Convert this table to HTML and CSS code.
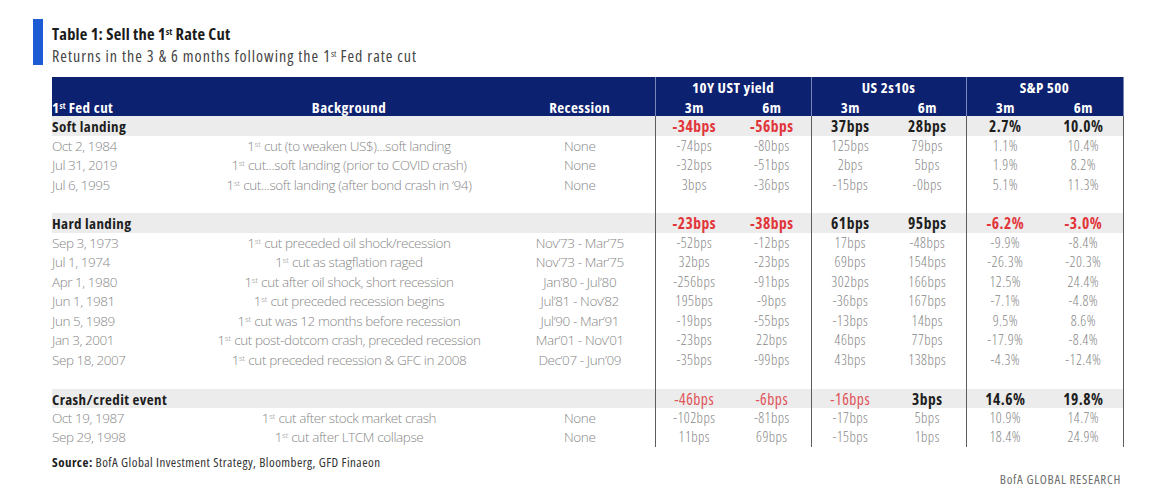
FILE: index.html
```html
<!DOCTYPE html>
<html lang="en">
<head>
<meta charset="utf-8">
<title>Table 1: Sell the 1st Rate Cut</title>
<link rel="stylesheet" href="styles.css">
</head>
<body>
<div class="page">
  <header class="heading">
    <div class="heading-bar"></div>
    <div class="heading-text">
      <h1 class="title">Table 1: Sell the 1<sup>st</sup> Rate Cut</h1>
      <p class="subtitle">Returns in the 3 &amp; 6 months following the 1<sup>st</sup> Fed rate cut</p>
    </div>
  </header>

  <div class="table-wrap">
    <table class="data">
      <colgroup>
        <col class="c-date"><col class="c-bg"><col class="c-rec">
        <col class="c-a"><col class="c-b">
        <col class="c-a"><col class="c-b2">
        <col class="c-a"><col class="c-b3">
      </colgroup>
      <thead>
        <tr class="hrow">
          <th class="h-left" rowspan="2">1<sup>st</sup> Fed cut</th>
          <th rowspan="2">Background</th>
          <th rowspan="2">Recession</th>
          <th class="grp" colspan="2">10Y UST yield</th>
          <th class="grp" colspan="2">US 2s10s</th>
          <th class="grp grp-last" colspan="2">S&amp;P 500</th>
        </tr>
        <tr class="hrow">
          <th class="grp">3m</th><th>6m</th>
          <th class="grp">3m</th><th>6m</th>
          <th class="grp">3m</th><th class="grp-last">6m</th>
        </tr>
      </thead>
      <tbody>
        <tr class="band">
          <td class="lbl" colspan="3">Soft landing</td>
          <td class="g neg">-34bps</td><td class="neg">-56bps</td>
          <td class="g">37bps</td><td>28bps</td>
          <td class="g">2.7%</td><td class="last">10.0%</td>
        </tr>
        <tr>
          <td class="date">Oct 2, 1984</td><td class="txt">1<sup>st</sup> cut (to weaken US$)...soft landing</td><td class="txt">None</td>
          <td class="g">-74bps</td><td>-80bps</td><td class="g">125bps</td><td>79bps</td><td class="g">1.1%</td><td class="last">10.4%</td>
        </tr>
        <tr>
          <td class="date">Jul 31, 2019</td><td class="txt">1<sup>st</sup> cut...soft landing (prior to COVID crash)</td><td class="txt">None</td>
          <td class="g">-32bps</td><td>-51bps</td><td class="g">2bps</td><td>5bps</td><td class="g">1.9%</td><td class="last">8.2%</td>
        </tr>
        <tr>
          <td class="date">Jul 6, 1995</td><td class="txt">1<sup>st</sup> cut...soft landing (after bond crash in ’94)</td><td class="txt">None</td>
          <td class="g">3bps</td><td>-36bps</td><td class="g">-15bps</td><td>-0bps</td><td class="g">5.1%</td><td class="last">11.3%</td>
        </tr>
        <tr class="blank">
          <td colspan="3"></td><td class="g" colspan="2"></td><td class="g" colspan="2"></td><td class="g last" colspan="2"></td>
        </tr>
        <tr class="band">
          <td class="lbl" colspan="3">Hard landing</td>
          <td class="g neg">-23bps</td><td class="neg">-38bps</td>
          <td class="g">61bps</td><td>95bps</td>
          <td class="g neg">-6.2%</td><td class="neg last">-3.0%</td>
        </tr>
        <tr>
          <td class="date">Sep 3, 1973</td><td class="txt">1<sup>st</sup> cut preceded oil shock/recession</td><td class="txt">Nov’73 - Mar’75</td>
          <td class="g">-52bps</td><td>-12bps</td><td class="g">17bps</td><td>-48bps</td><td class="g">-9.9%</td><td class="last">-8.4%</td>
        </tr>
        <tr>
          <td class="date">Jul 1, 1974</td><td class="txt">1<sup>st</sup> cut as stagflation raged</td><td class="txt">Nov’73 - Mar’75</td>
          <td class="g">32bps</td><td>-23bps</td><td class="g">69bps</td><td>154bps</td><td class="g">-26.3%</td><td class="last">-20.3%</td>
        </tr>
        <tr>
          <td class="date">Apr 1, 1980</td><td class="txt">1<sup>st</sup> cut after oil shock, short recession</td><td class="txt">Jan’80 - Jul’80</td>
          <td class="g">-256bps</td><td>-91bps</td><td class="g">302bps</td><td>166bps</td><td class="g">12.5%</td><td class="last">24.4%</td>
        </tr>
        <tr>
          <td class="date">Jun 1, 1981</td><td class="txt">1<sup>st</sup> cut preceded recession begins</td><td class="txt">Jul’81 - Nov’82</td>
          <td class="g">195bps</td><td>-9bps</td><td class="g">-36bps</td><td>167bps</td><td class="g">-7.1%</td><td class="last">-4.8%</td>
        </tr>
        <tr>
          <td class="date">Jun 5, 1989</td><td class="txt">1<sup>st</sup> cut was 12 months before recession</td><td class="txt">Jul’90 - Mar’91</td>
          <td class="g">-19bps</td><td>-55bps</td><td class="g">-13bps</td><td>14bps</td><td class="g">9.5%</td><td class="last">8.6%</td>
        </tr>
        <tr>
          <td class="date">Jan 3, 2001</td><td class="txt">1<sup>st</sup> cut post-dotcom crash, preceded recession</td><td class="txt">Mar’01 - Nov’01</td>
          <td class="g">-23bps</td><td>22bps</td><td class="g">46bps</td><td>77bps</td><td class="g">-17.9%</td><td class="last">-8.4%</td>
        </tr>
        <tr>
          <td class="date">Sep 18, 2007</td><td class="txt">1<sup>st</sup> cut preceded recession &amp; GFC in 2008</td><td class="txt">Dec’07 - Jun’09</td>
          <td class="g">-35bps</td><td>-99bps</td><td class="g">43bps</td><td>138bps</td><td class="g">-4.3%</td><td class="last">-12.4%</td>
        </tr>
        <tr class="blank">
          <td colspan="3"></td><td class="g" colspan="2"></td><td class="g" colspan="2"></td><td class="g last" colspan="2"></td>
        </tr>
        <tr class="band">
          <td class="lbl" colspan="3">Crash/credit event</td>
          <td class="g neg soft">-46bps</td><td class="neg soft">-6bps</td>
          <td class="g neg soft">-16bps</td><td>3bps</td>
          <td class="g">14.6%</td><td class="last">19.8%</td>
        </tr>
        <tr>
          <td class="date">Oct 19, 1987</td><td class="txt">1<sup>st</sup> cut after stock market crash</td><td class="txt">None</td>
          <td class="g">-102bps</td><td>-81bps</td><td class="g">-17bps</td><td>5bps</td><td class="g">10.9%</td><td class="last">14.7%</td>
        </tr>
        <tr>
          <td class="date">Sep 29, 1998</td><td class="txt">1<sup>st</sup> cut after LTCM collapse</td><td class="txt">None</td>
          <td class="g">11bps</td><td>69bps</td><td class="g">-15bps</td><td>1bps</td><td class="g">18.4%</td><td class="last">24.9%</td>
        </tr>
      </tbody>
    </table>
    <p class="source"><b>Source:</b> BofA Global Investment Strategy, Bloomberg, GFD Finaeon</p>
    <p class="brand">BofA GLOBAL RESEARCH</p>
  </div>
</div>
</body>
</html>
```

FILE: styles.css
```css
html, body {
  margin: 0;
  background: #ffffff;
}

body {
  font-family: "Open Sans", "Liberation Sans", sans-serif;
  font-stretch: 75%;
  color: #222;
}

.page {
  padding: 19px 0 0 33px;
}

.heading {
  display: flex;
  align-items: flex-start;
  gap: 9px;
}

.heading-bar {
  flex: none;
  width: 10px;
  height: 46px;
  background: #1d5bd4;
}

.heading-text {
  padding-top: 4px;
}

.title {
  margin: 0;
  font-size: 16.5px;
  line-height: 22.5px;
  font-weight: 700;
  letter-spacing: 0.2px;
  color: #1c1c1c;
}

.subtitle {
  margin: 0;
  font-size: 16px;
  line-height: 21.8px;
  font-weight: 400;
  letter-spacing: 1px;
  color: #454545;
}

sup {
  font-size: 0.58em;
  line-height: 0;
  vertical-align: 0.5em;
  letter-spacing: 0;
}

.table-wrap {
  width: 1071px;
  margin: 10px 0 0 19px;
}

.data {
  width: 1071px;
  table-layout: fixed;
  border-collapse: collapse;
  border-spacing: 0;
}

.c-date { width: 141px; }
.c-bg { width: 312px; }
.c-rec { width: 150px; }
.c-a { width: 78px; }
.c-b { width: 78px; }
.c-b2 { width: 77px; }
.c-b3 { width: 79px; }

.data tr {
  height: 19.45px;
}

.data th,
.data td {
  padding: 1px 0 0;
  line-height: 18.45px;
  text-align: center;
  white-space: nowrap;
  vertical-align: bottom;
}

.data thead th {
  background: #0d2171;
  color: #ffffff;
  font-size: 15px;
  font-weight: 700;
  letter-spacing: 0.45px;
}

.data thead th.h-left {
  text-align: left;
}

.data thead th.grp {
  border-left: 1px solid #7a86b8;
}

.data thead th.grp-last {
  border-right: 1px solid #7a86b8;
}

.data tbody td {
  font-size: 14.5px;
  font-weight: 300;
  letter-spacing: 0.45px;
  color: #878787;
}

.data tbody td.txt,
.data tbody td.date {
  font-size: 13.5px;
  font-stretch: 100%;
  letter-spacing: -0.4px;
}

.data tbody td.date {
  text-align: left;
  letter-spacing: -0.45px;
}

.data tbody td.g {
  border-left: 1px solid #5c5c5c;
}

.data tbody td.last {
  border-right: 1px solid #5c5c5c;
}

.data tbody tr.band td {
  background: #ececec;
  color: #1e1e1e;
  font-size: 15.5px;
  font-weight: 700;
  letter-spacing: 0.5px;
}

.data tbody tr.band td.lbl {
  text-align: left;
  font-size: 15px;
  letter-spacing: 0.4px;
}

.data tbody tr.band td.neg {
  color: #e2353a;
}

.data tbody tr.band td.soft {
  font-weight: 500;
  color: #e0545a;
}

.source {
  margin: 8px 0 0;
  font-size: 13px;
  line-height: 14px;
  letter-spacing: 0.45px;
  color: #333;
}

.source b {
  font-weight: 700;
  color: #1c1c1c;
}

.brand {
  margin: 3px 0 0;
  padding-right: 2px;
  text-align: right;
  font-size: 13px;
  line-height: 14px;
  color: #6f6f6f;
  letter-spacing: 0.7px;
}
```
